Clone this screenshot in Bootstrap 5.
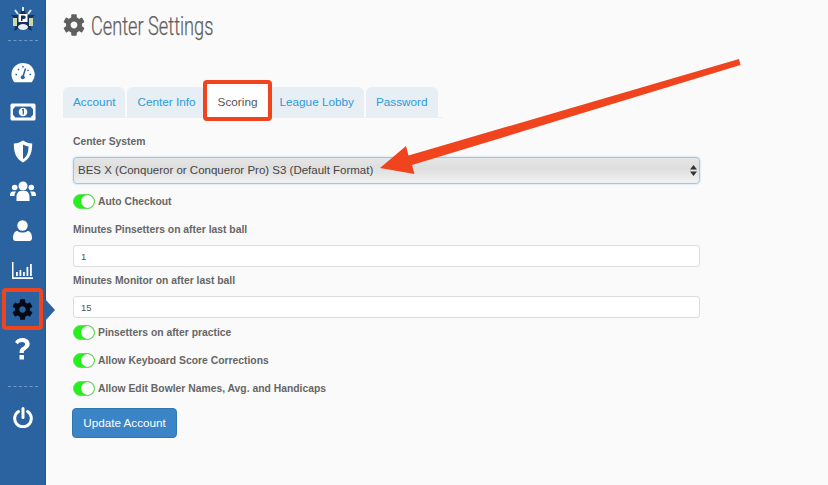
<!DOCTYPE html>
<html lang="en">
<head>
<meta charset="utf-8">
<title>Center Settings</title>
<link rel="stylesheet" href="https://cdn.jsdelivr.net/npm/bootstrap@5.3.0/dist/css/bootstrap.min.css">
<style>
html,body{height:100%;}
body{background:#fafafa;font-family:"Liberation Sans",Arial,sans-serif;color:#555;overflow:hidden;}
.shell{height:485px;}
.rail{width:46px;flex:none;background:#2a639f;border-right:1px solid #24578f;position:relative;}
.rail-logo{height:40px;}
.rail-sep{width:30px;border-top:1px dashed #6f9ac8;height:0;flex:none;}
.rail-item{height:39.5px;width:100%;flex:none;color:#fff;position:relative;}
.rail-item.now{color:#050a14;}
.rail-item.now::after{content:"";position:absolute;left:45px;top:50%;margin-top:-11px;border-left:10px solid #2a639f;border-top:11px solid transparent;border-bottom:11px solid transparent;}
.rail-top{height:53px;flex:none;}
.rail-gap{height:17px;flex:none;}
.rail-gap-sm{height:11px;flex:none;}
.content{flex:1;min-width:0;padding:0 128px 0 17px;position:relative;}
.page-title{font-family:"Roboto",sans-serif;font-size:26px;font-weight:300;color:#5f5f5f;margin:0;height:87px;padding:14px 0 0 0;gap:6px;line-height:24px;white-space:nowrap;}
.title-text{display:inline-block;transform:scaleX(.7);transform-origin:left center;-webkit-text-stroke:.25px #5f5f5f;}
.tabs-row{margin:0;padding:0;border-bottom:1px solid #eeeeee;gap:2px;height:31px;width:380px;flex-wrap:nowrap;}
.tabs-row .nav-link{font-size:11.75px;line-height:30px;height:30px;padding:0 10px;background:#e7eef4;color:#2c9bd8;border:0;border-radius:6px 6px 0 0;margin:0;white-space:nowrap;}
.tabs-row .nav-link.active{background:#fff;color:#555;}
.form-area{padding:17px 0 0 10px;}
.fld-label{display:block;font-size:10.35px;font-weight:700;color:#666;line-height:14px;margin:0;}
.sel-wrap{position:relative;margin-top:8px;}
.fld-select.form-select{height:27px;padding:0 24px 0 4px;font-size:11.5px;color:#444;border:1px solid #9cc8e8;border-radius:4px;line-height:25px;background:linear-gradient(#e6e6e6,#dedede 40%,#f1f1f1);box-shadow:0 0 2px rgba(90,160,220,.5);}
.sel-caret{position:absolute;right:3px;top:8px;}
.sw-row{gap:3px;height:15px;}
.sw{width:22px;height:15px;border-radius:8px;background:#26f01c;position:relative;flex:none;border:1px solid #5fe05a;}
.sw::after{content:"";position:absolute;right:0;top:0;width:13px;height:13px;border-radius:50%;background:#fff;box-shadow:0 0 1px rgba(0,0,0,.4);}
.sw-text{font-size:10.35px;font-weight:700;color:#666;line-height:15px;}
.fld-input.form-control{height:22px;min-height:0;padding:0 7px;font-size:9.5px;line-height:20px;color:#555;border:1px solid #dcdcdc;border-radius:3px;background:#fff;margin-top:8px;}
.m1{margin-top:10px;}.m2{margin-top:14px;}.m3{margin-top:7px;}.m4{margin-top:7px;}.m5{margin-top:13px;}.m6{margin-top:12px;}
.upd.btn{background:#3b84c6;border:1px solid #3276b1;color:#fff;font-size:11.7px;height:30px;width:105px;padding:0;border-radius:4px;margin-left:-1px;line-height:28px;}
.mark-box{position:absolute;border:4px solid #f0441f;border-radius:4px;pointer-events:none;}
.mark-tab{left:203px;top:80px;width:69px;height:41px;}
.mark-gear{left:2px;top:288px;width:41px;height:42px;}
.mark-arrow{position:absolute;left:370px;top:50px;pointer-events:none;}
</style>
</head>
<body>
<svg width="0" height="0" class="position-absolute">
<symbol id="gearic" viewBox="-12 -12 24 24">
<circle r="6.2" fill="none" stroke="currentColor" stroke-width="5"/>
<g fill="currentColor">
<rect x="-3" y="-11.6" width="6" height="5" rx="1"/>
<rect x="-3" y="-11.6" width="6" height="5" rx="1" transform="rotate(60)"/>
<rect x="-3" y="-11.6" width="6" height="5" rx="1" transform="rotate(120)"/>
<rect x="-3" y="-11.6" width="6" height="5" rx="1" transform="rotate(180)"/>
<rect x="-3" y="-11.6" width="6" height="5" rx="1" transform="rotate(240)"/>
<rect x="-3" y="-11.6" width="6" height="5" rx="1" transform="rotate(300)"/>
</g>
</symbol>
</svg>
<div class="d-flex shell">
<nav class="rail d-flex flex-column align-items-center">
<div class="rail-top d-flex flex-column align-items-center">
<div class="rail-logo d-flex align-items-center justify-content-center">
<svg width="28" height="28" viewBox="0 0 28 28"><polygon points="14,1 17.5,9 26,9 20,15 23,25 14,20 5,25 8,15 2,9 10.5,9" fill="#16305c"/><path d="M4 12h4v8H4zM20 12h4v8h-4z" fill="#cfd8a8"/><path d="M6 4l3 4M22 4l-3 4M14 1v4" stroke="#dfe8f2" stroke-width="2"/><rect x="9.500" y="8" width="9" height="8" fill="#fff"/><path d="M12 9.500h3a1.700 1.700 0 010 3.500h-1.500v2H12z" fill="#16305c"/><ellipse cx="14" cy="21" rx="5" ry="3" fill="#e8edf2"/></svg>
</div>
<div class="rail-sep"></div>
</div>
<a class="rail-item d-flex align-items-center justify-content-center" href="#" aria-label="Dashboard">
<svg width="24" height="21" viewBox="0 0 24 21"><path fill="currentColor" fill-rule="evenodd" d="M12 1a11.500 11.500 0 00-11.500 11.500c0 2.700.9 5.200 2.400 7.200.3.400.7.600 1.200.600h15.800c.5 0 .9-.2 1.200-.6a11.500 11.500 0 00-9.100-18.700z"/><path d="M12 14.500L14.500 6.500M4.500 12.500h1.500M7 7l1 1M12 4v1.500M17.500 8l-1 .8M18.500 12.500h1.500" stroke="#2a639f" stroke-width="1.500" fill="none"/><circle cx="11.800" cy="15.200" r="2" fill="#2a639f"/></svg>
</a>
<a class="rail-item d-flex align-items-center justify-content-center" href="#" aria-label="Billing">
<svg width="26" height="18" viewBox="0 0 26 18"><rect x=".5" y=".5" width="25" height="17" rx="1.500" fill="currentColor"/><path d="M5 3.500h16a3.500 3.500 0 002 2.500v6a3.500 3.500 0 00-2 2.500H5a3.500 3.500 0 00-2-2.500V6a3.500 3.500 0 002-2.500z" fill="#2a639f"/><circle cx="13" cy="9" r="4.300" fill="#fff"/><path d="M12 7l1.300-.6V11.500" stroke="#2a639f" stroke-width="1.300" fill="none"/></svg>
</a>
<a class="rail-item d-flex align-items-center justify-content-center" href="#" aria-label="Security">
<svg width="20" height="23" viewBox="0 0 20 23"><path fill="currentColor" fill-rule="evenodd" d="M10 .5C7 2.500 4 3.200.8 3.500c0 8 1.500 15 9.200 19 7.700-4 9.200-11 9.200-19C16 3.200 13 2.500 10 .5zM10 4.500c1.700.9 3.500 1.500 5.500 1.900 0 5-1 9.900-5.500 12.500z"/></svg>
</a>
<a class="rail-item d-flex align-items-center justify-content-center" href="#" aria-label="Users">
<svg width="26" height="20" viewBox="0 0 26 20" fill="currentColor"><circle cx="13" cy="5" r="4.500"/><circle cx="4.700" cy="6.500" r="2.800"/><circle cx="21.300" cy="6.500" r="2.800"/><path d="M6.500 20v-4.500c0-3 2-5.500 4-5.500h5c2 0 4 2.500 4 5.500V20zM0 14.500c0-2.500 1-4 3-4h3a7 7 0 00-1.500 4.500H0zM26 14.500c0-2.500-1-4-3-4h-3a7 7 0 011.500 4.500H26z"/></svg>
</a>
<a class="rail-item d-flex align-items-center justify-content-center" href="#" aria-label="Profile">
<svg width="19" height="21" viewBox="0 0 19 21" fill="currentColor"><circle cx="9.500" cy="5.500" r="5.200"/><path d="M0 18c0-4.500 2-7 4.500-7 1.300 1 3 1.500 5 1.500s3.700-.5 5-1.500C17 11 19 13.500 19 18c0 1.700-1 3-2.700 3H2.700C1 21 0 19.700 0 18z"/></svg>
</a>
<a class="rail-item d-flex align-items-center justify-content-center" href="#" aria-label="Reports">
<svg width="21" height="17" viewBox="0 0 21 17" fill="currentColor"><path d="M0 0h1.500v15.300H21V17H0z"/><path d="M4 10h1.800v4H4zM7.500 8h1.800v6H7.500zM11 10h1.800v4H11zM14.500 5h1.800v9h-1.800zM18 2h1.800v12H18z"/></svg>
</a>
<a class="rail-item now d-flex align-items-center justify-content-center" href="#" aria-label="Settings">
<svg width="21" height="21"><use href="#gearic"/></svg>
</a>
<a class="rail-item d-flex align-items-center justify-content-center" href="#" aria-label="Help">
<svg width="15" height="22" viewBox="0 0 15 22" fill="currentColor"><path d="M7.600 0C4 0 1.700 1.500 0 4.100l2.800 2.200c1-1.300 2.200-2.200 4.300-2.200 1.700 0 3 .8 3 2.200 0 1.200-.9 1.900-2.300 2.800C5.800 10.200 4.600 11.400 4.600 14v1h4.200v-.8c0-1.300.8-1.900 2.200-2.800 2-1.200 3.700-2.600 3.700-5.300C14.700 2.300 11.400 0 7.600 0z"/><rect x="4.500" y="17" width="4.500" height="4.500" rx=".6"/></svg>
</a>
<div class="rail-gap"></div>
<div class="rail-sep"></div>
<div class="rail-gap-sm"></div>
<a class="rail-item d-flex align-items-center justify-content-center" href="#" aria-label="Sign out">
<svg width="20" height="21" viewBox="0 0 20 21" fill="none" stroke="currentColor" stroke-width="3" stroke-linecap="round"><path d="M5.500 4.500a8.300 8.300 0 109 0"/><path d="M10 1.500v9"/></svg>
</a>
</nav>
<main class="content">
<h1 class="page-title d-flex align-items-start">
<svg width="22" height="22" class="flex-shrink-0"><use href="#gearic"/></svg>
<span class="title-text">Center Settings</span>
</h1>
<ul class="nav nav-tabs tabs-row">
<li class="nav-item"><a class="nav-link" href="#">Account</a></li>
<li class="nav-item"><a class="nav-link" href="#">Center Info</a></li>
<li class="nav-item"><a class="nav-link active" href="#">Scoring</a></li>
<li class="nav-item"><a class="nav-link" href="#">League Lobby</a></li>
<li class="nav-item"><a class="nav-link" href="#">Password</a></li>
</ul>
<form class="form-area" onsubmit="return false">
<label class="fld-label" for="sys">Center System</label>
<div class="sel-wrap">
<select id="sys" class="form-select fld-select"><option>BES X (Conqueror or Conqueror Pro) S3 (Default Format)</option></select>
<svg class="sel-caret" width="7" height="11" viewBox="0 0 7 11" fill="#333"><path d="M3.500 0L7 4.500H0zM3.500 11L0 6.500h7z"/></svg>
</div>
<div class="d-flex align-items-center sw-row m1"><span class="sw"></span><span class="sw-text">Auto Checkout</span></div>
<label class="fld-label m2" for="pin">Minutes Pinsetters on after last ball</label>
<input id="pin" class="form-control fld-input" value="1">
<label class="fld-label m3" for="mon">Minutes Monitor on after last ball</label>
<input id="mon" class="form-control fld-input" value="15">
<div class="d-flex align-items-center sw-row m4"><span class="sw"></span><span class="sw-text">Pinsetters on after practice</span></div>
<div class="d-flex align-items-center sw-row m5"><span class="sw"></span><span class="sw-text">Allow Keyboard Score Corrections</span></div>
<div class="d-flex align-items-center sw-row m5"><span class="sw"></span><span class="sw-text">Allow Edit Bowler Names, Avg. and Handicaps</span></div>
<div class="m6"><button class="btn upd" type="button">Update Account</button></div>
</form>
</main>
</div>
<div class="mark-box mark-tab"></div>
<div class="mark-box mark-gear"></div>
<svg class="mark-arrow" width="380" height="130" viewBox="370 50 380 130"><polygon points="739,59 740.500,65 412,165 414.500,174 380,168 406,146 408.500,155.500" fill="#f0441f"/></svg>
</body>
</html>
